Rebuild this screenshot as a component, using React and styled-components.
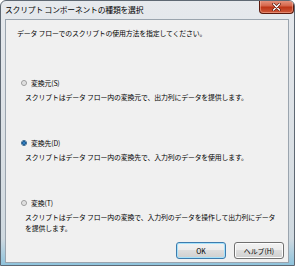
import React, { useState } from 'react'
import styled, { createGlobalStyle } from 'styled-components'

const GlobalStyle = createGlobalStyle`
    html, body {
        margin: 0;
        padding: 0;
        background: #ffffff;
    }
    * {
        box-sizing: border-box;
    }
`;

const Window = styled.div`
    width: 295px;
    height: 266px;
    display: flex;
    flex-direction: column;
    border: 1px solid #5e6873;
    border-radius: 6px 6px 0 0;
    background: linear-gradient(to bottom, #e6e9ed 0%, #d9dfe4 60%, #cfd9e0 90%, #8ec3dc 100%);
    font-family: "Noto Sans CJK JP", "Noto Sans", sans-serif;
    color: #000;
    overflow: hidden;
`;

const TitleBar = styled.div`
    height: 18px;
    display: flex;
    justify-content: space-between;
    align-items: flex-start;
    padding-left: 4px;
    flex-shrink: 0;
`;

const Title = styled.span`
    font-size: 7.8px;
    line-height: 18px;
    letter-spacing: -0.2px;
    white-space: nowrap;
`;

const CloseButton = styled.div`
    width: 35px;
    height: 14px;
    margin-top: -1px;
    border: 1px solid #5b1a0e;
    border-top: none;
    border-radius: 0 0 4px 4px;
    background: linear-gradient(to bottom, #e79a86 0%, #d5654a 45%, #bd3517 55%, #cf5a3c 100%);
    box-shadow: inset 0 0 0 1px rgba(255, 200, 180, 0.45);
    display: flex;
    align-items: center;
    justify-content: center;
`;

const Panel = styled.div`
    flex: 1;
    margin: 0 5px 2px 4px;
    background: #f0f0f0;
    border: 1px solid #9aa4ae;
    display: flex;
    flex-direction: column;
    padding: 8px 4px 3px 11px;
    font-size: 6.9px;
    letter-spacing: -0.15px;
`;

const Intro = styled.p`
    margin: 0;
    line-height: 10px;
`;

const Options = styled.div`
    display: flex;
    flex-direction: column;
    gap: 35px;
    margin-top: 40px;
`;

const Option = styled.div`
    display: flex;
    flex-direction: column;
`;

const OptionLabel = styled.label`
    display: flex;
    align-items: center;
    gap: 4px;
    margin-left: 4px;
    line-height: 10px;
    cursor: default;
`;

const Radio = styled.span`
    width: 6px;
    height: 6px;
    border-radius: 50%;
    border: 1px solid ${p => (p.checked ? '#2c628b' : '#9a9a9a')};
    background: ${p => (p.checked
        ? 'radial-gradient(circle, #3e9be0 0, #1d5c99 1.6px, #e8f3fb 2px)'
        : 'radial-gradient(circle, #d8d8d8 0, #f4f4f4 3px)')};
    flex-shrink: 0;
`;

const Description = styled.p`
    margin: 4px 0 0 8px;
    line-height: 11px;
    width: 256px;
`;

const ButtonRow = styled.div`
    margin-top: auto;
    display: flex;
    justify-content: flex-end;
    gap: 8px;
`;

const Button = styled.button`
    width: 50px;
    height: 17px;
    padding: 0;
    font-family: inherit;
    font-size: 6.9px;
    color: #000;
    border-radius: 3px;
    border: 1px solid ${p => (p.primary ? '#3d7bad' : '#707070')};
    background: linear-gradient(to bottom, #f2f2f2 0%, #ebebeb 49%, #dddddd 50%, #cfcfcf 100%);
    box-shadow: inset 0 0 0 1px ${p => (p.primary ? '#a6e2fb' : '#fcfcfc')};
`;

const options = [
    { id: 'source', label: '変換元(S)', text: 'スクリプトはデータ フロー内の変換元で、出力列にデータを提供します。' },
    { id: 'dest', label: '変換先(D)', text: 'スクリプトはデータ フロー内の変換先で、入力列のデータを使用します。' },
    { id: 'transform', label: '変換(T)', text: 'スクリプトはデータ フロー内の変換で、入力列のデータを操作して出力列にデータを提供します。' },
];

const App = () => {
    const [selected, setSelected] = useState('dest');

    return (
        <>
            <GlobalStyle />
            <Window>
                <TitleBar>
                    <Title>スクリプト コンポーネントの種類を選択</Title>
                    <CloseButton>
                        <svg width="9" height="8" viewBox="0 0 9 8">
                            <path d="M1.5 1 L7.5 7 M7.5 1 L1.5 7" stroke="#5b1a0e" strokeWidth="2.6" strokeLinecap="round" />
                            <path d="M1.5 1 L7.5 7 M7.5 1 L1.5 7" stroke="#ffffff" strokeWidth="1.4" strokeLinecap="round" />
                        </svg>
                    </CloseButton>
                </TitleBar>
                <Panel>
                    <Intro>データ フローでのスクリプトの使用方法を指定してください。</Intro>
                    <Options>
                        {options.map(o => (
                            <Option key={o.id}>
                                <OptionLabel onClick={() => setSelected(o.id)}>
                                    <Radio checked={selected === o.id} />
                                    {o.label}
                                </OptionLabel>
                                <Description>{o.text}</Description>
                            </Option>
                        ))}
                    </Options>
                    <ButtonRow>
                        <Button primary>OK</Button>
                        <Button>ヘルプ(H)</Button>
                    </ButtonRow>
                </Panel>
            </Window>
        </>
    )
}

export default App
